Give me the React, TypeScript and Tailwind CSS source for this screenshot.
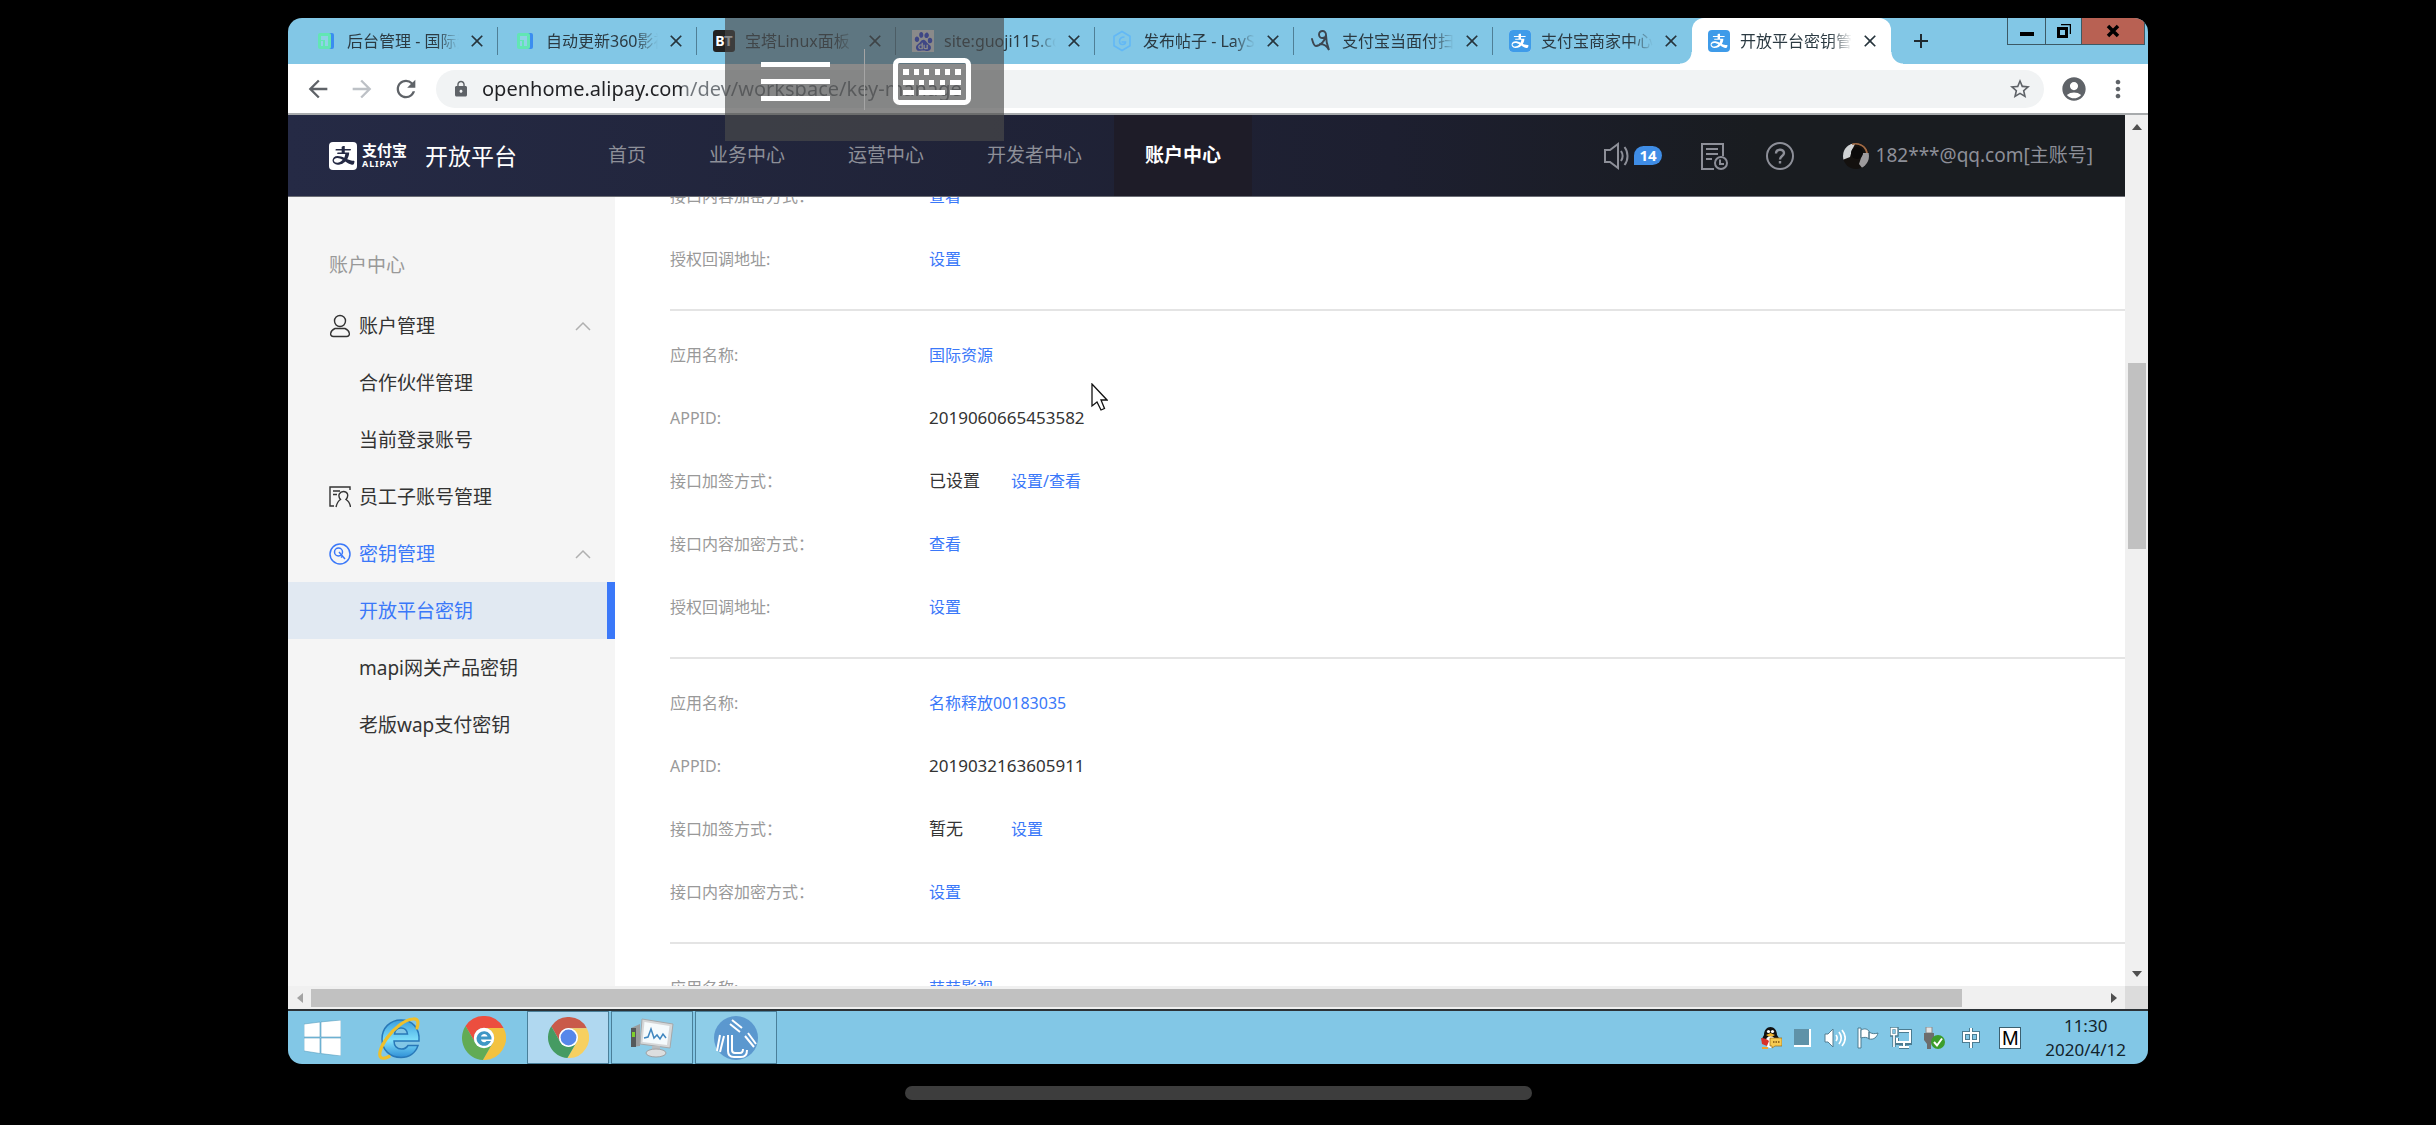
import React from "react";
import clsx from "clsx";
import {
  MdArrowBack,
  MdArrowForward,
  MdRefresh,
  MdLock,
  MdStarBorder,
  MdAccountCircle,
  MdMoreVert,
  MdClose,
  MdAdd,
} from "react-icons/md";
import { AiFillAlipaySquare } from "react-icons/ai";
import { SiBaidu } from "react-icons/si";

/* ---------- favicons ---------- */

const CubeIcon = () => (
  <svg viewBox="0 0 22 22" className="size-[22px]">
    <rect x="8" y="3" width="11" height="16" rx="2" fill="#3b8df0" />
    <rect x="3" y="3" width="13" height="16" rx="2" fill="#62e6b4" />
    <path d="M6 6h7v10h-3v-6H6z" fill="#8fd3e6" />
    <path d="M6 11h2v5H6z" fill="#8fd3e6" />
  </svg>
);

const BtIcon = () => (
  <span className="flex size-[22px] items-center justify-center rounded-[3px] bg-[#222] text-[14px] leading-none font-bold text-white">
    BT
  </span>
);

const BaiduIcon = () => (
  <span className="flex size-[22px] items-center justify-center bg-white text-[#2a3ff0]">
    <SiBaidu className="size-[19px]" />
  </span>
);

const LayIcon = () => (
  <svg viewBox="0 0 22 22" className="size-[22px]" fill="none" stroke="#62b8f6" strokeWidth="1.6">
    <path d="M11 1.5l8 4.7v9.6l-8 4.7-8-4.7V6.200z" />
    <path d="M13.500 7c-3 0-5 1.500-5 4.500 0 2 1 3 3 3s3-1 3-2.500h-4" />
  </svg>
);

const ScriptIcon = () => (
  <svg viewBox="0 0 22 22" className="size-[22px]" fill="none" stroke="#3c4650" strokeWidth="1.900" strokeLinecap="round">
    <path d="M2 9c1 4 2 7 4 7 4 0 10-6 10-11 0-2.500-1.500-4-3.500-4S9 2.500 9 4.500 10.500 8 12.500 8 16 7 16 5c0 5 1 10 3 15-2-4-5-6-9-6" />
  </svg>
);

const AlipayFavicon = () => (
  <span className="flex size-[22px] items-center justify-center overflow-hidden rounded-[4px] bg-white text-[#3e9be9]">
    <AiFillAlipaySquare className="size-[30px] shrink-0" />
  </span>
);

const tabs = [
  { title: "后台管理 - 国际资源", icon: <CubeIcon /> },
  { title: "自动更新360影视", icon: <CubeIcon /> },
  { title: "宝塔Linux面板", icon: <BtIcon /> },
  { title: "site:guoji115.com", icon: <BaiduIcon /> },
  { title: "发布帖子 - LaySNS", icon: <LayIcon /> },
  { title: "支付宝当面付扫码", icon: <ScriptIcon /> },
  { title: "支付宝商家中心", icon: <AlipayFavicon /> },
  { title: "开放平台密钥管理", icon: <AlipayFavicon />, active: true },
];

const TabStrip = () => (
  <div className="flex h-[46px] items-stretch bg-[#82c7e6] pl-[11px]">
    {tabs.map((tab, i) => (
      <div
        key={tab.title}
        className={clsx(
          "relative flex w-[199px] items-center pl-4",
          tab.active && "rounded-t-xl bg-white"
        )}
      >
        {tab.active && (
          <>
            <span className="absolute bottom-0 -left-3 size-3 bg-[radial-gradient(circle_at_top_left,transparent_11px,white_12px)]" />
            <span className="absolute -right-3 bottom-0 size-3 bg-[radial-gradient(circle_at_top_right,transparent_11px,white_12px)]" />
          </>
        )}
        {tab.icon}
        <button className="ml-[10px] w-28 overflow-hidden text-left text-base whitespace-nowrap text-[#2b3a42] [mask-image:linear-gradient(to_right,black_80%,transparent)]">
          {tab.title}
        </button>
        <button aria-label="关闭" className="ml-2 text-[#26343c]">
          <MdClose className="size-5" />
        </button>
        {i < 6 && <span className="absolute right-0 h-7 w-px bg-[#4f7f96]" />}
      </div>
    ))}
    <button aria-label="新标签页" className="ml-[18px] text-[#1f2a30]">
      <MdAdd className="size-6" />
    </button>
    <div className="mr-[3px] ml-auto flex h-[27px] border border-t-0 border-[#3c5965] text-black">
      <button aria-label="最小化" className="flex w-[38px] items-center justify-center border-r border-[#3c5965]">
        <svg viewBox="0 0 14 14" className="size-[14px]">
          <path d="M0 8h14v4H0z" />
        </svg>
      </button>
      <button aria-label="还原" className="flex w-9 items-center justify-center border-r border-[#3c5965]">
        <svg viewBox="0 0 14 14" className="size-[14px]" fill="none" stroke="currentColor">
          <path d="M1.500 4.500h8v8h-8z" strokeWidth="3" />
          <path d="M4 .5h9.500V10" strokeWidth="1.500" />
        </svg>
      </button>
      <button aria-label="关闭窗口" className="flex w-[62px] items-center justify-center bg-[#b86153]">
        <svg viewBox="0 0 14 14" className="size-[14px]" stroke="currentColor" strokeWidth="3.500">
          <path d="M2 2l10 10M12 2L2 12" />
        </svg>
      </button>
    </div>
  </div>
);

const Toolbar = () => (
  <div className="flex h-[51px] items-center border-b-2 border-[#a8abad] bg-white text-[#5f6368]">
    <button aria-label="后退" className="ml-4">
      <MdArrowBack className="size-7" />
    </button>
    <button aria-label="前进" className="ml-4 text-[#bdc1c6]">
      <MdArrowForward className="size-7" />
    </button>
    <button aria-label="刷新" className="ml-4">
      <MdRefresh className="size-7" />
    </button>
    <div className="ml-4 flex h-[38px] flex-1 items-center rounded-full bg-[#f1f3f4] pr-3 pl-4">
      <MdLock className="size-[18px]" />
      <input
        aria-label="地址"
        readOnly
        value="openhome.alipay.com/dev/workspace/key-manage"
        className="ml-3 flex-1 bg-[linear-gradient(to_right,#202124_200px,#70757a_200px)] bg-clip-text text-[20px] text-transparent outline-none"
      />
      <button aria-label="收藏">
        <MdStarBorder className="size-6" />
      </button>
    </div>
    <button aria-label="用户" className="ml-4">
      <MdAccountCircle className="size-7" />
    </button>
    <button aria-label="更多" className="mr-4 ml-4">
      <MdMoreVert className="size-7" />
    </button>
  </div>
);

/* ---------- alipay header ---------- */

const navItems = ["首页", "业务中心", "运营中心", "开发者中心", "账户中心"];

const SpeakerIcon = () => (
  <svg viewBox="0 0 28 28" className="size-7" fill="none" stroke="currentColor" strokeWidth="2">
    <path d="M2 8h5l8-6v24l-8-6H2z" />
    <path d="M18 9c2 3 2 7 0 10M21.500 5c4 5 4 13 0 18" />
  </svg>
);

const OrderIcon = () => (
  <svg viewBox="0 0 28 28" className="size-7" fill="none" stroke="currentColor" strokeWidth="2">
    <path d="M14 27H2V2h21v12M6 7h12M6 12h12M6 17h6" />
    <circle cx="21" cy="21" r="6" />
    <path d="M20 17.500V22h4" />
  </svg>
);

const HelpIcon = () => (
  <svg viewBox="0 0 28 28" className="size-7" fill="none" stroke="currentColor" strokeWidth="2">
    <circle cx="14" cy="14" r="13" />
    <path d="M10 11.500c0-5 8-5 8-.5 0 3-4 3-4 6.500M14 19v2.500" strokeWidth="2.400" />
  </svg>
);

const Avatar = () => (
  <svg viewBox="0 0 28 28" className="size-7">
    <clipPath id="face">
      <circle cx="14" cy="14" r="13" />
    </clipPath>
    <g clipPath="url(#face)">
      <path d="M0 0h28v28H0z" fill="#14110f" />
      <path d="M0 16C0 6 6 1 13 2l-3 6-2 7-8 3z" fill="#d0d3d5" />
      <path d="M10 2c8-2 14 3 15 9" fill="none" stroke="#a06a45" strokeWidth="2" />
      <path d="M21 11h7v11l-7 5-4-5 2-6z" fill="#9d9b9d" />
      <circle cx="15" cy="11" r="6" fill="#0b0a0a" />
    </g>
  </svg>
);

const Header = () => (
  <header className="flex h-[82px] shrink-0 items-center border-b border-[#6b6d75] bg-[linear-gradient(to_right,#252a45,#1d1f30_60%,#191c20_80%)] text-[#8d8f98]">
    <a href="#" className="ml-[41px] flex items-center text-white">
      <span className="flex size-7 items-center justify-center overflow-hidden rounded-[4px]">
        <AiFillAlipaySquare className="size-[39px] shrink-0" />
      </span>
      <span className="ml-[5px] flex flex-col">
        <span className="text-[15px] leading-[17px] font-bold">支付宝</span>
        <span className="text-[9px] leading-[10px] font-bold tracking-widest">ALIPAY</span>
      </span>
      <span className="ml-[18px] text-[23px] leading-8">开放平台</span>
    </a>
    <nav className="ml-[60px] flex gap-px self-stretch text-[19px]">
      {navItems.map((item) => (
        <a
          key={item}
          href="#"
          className={clsx(
            "flex items-center px-[31px]",
            item === "账户中心" && "bg-[#1e1c28] font-bold text-white"
          )}
        >
          {item}
        </a>
      ))}
    </nav>
    <div className="mr-8 ml-auto flex items-center">
      <a href="#" aria-label="消息" className="flex items-center">
        <SpeakerIcon />
        <span className="ml-[3px] rounded-full rounded-bl-none bg-[#3f8de6] px-[5px] text-[15px] leading-[19px] font-bold text-white">
          14
        </span>
      </a>
      <a href="#" aria-label="工单" className="ml-[38px]">
        <OrderIcon />
      </a>
      <a href="#" aria-label="帮助" className="ml-[38px]">
        <HelpIcon />
      </a>
      <a href="#" className="ml-12 flex items-center text-[19px]">
        <Avatar />
        <span className="ml-[6px]">182***@qq.com[主账号]</span>
      </a>
    </div>
  </header>
);

/* ---------- sidebar ---------- */

const UserIcon = () => (
  <svg viewBox="0 0 22 24" className="h-6 w-[22px]" fill="none" stroke="currentColor" strokeWidth="1.400">
    <circle cx="11" cy="7" r="5.500" />
    <path d="M6 14.500h10c5 2 6 8 1.500 8h-13C0 22.500 1 16.500 6 14.500z" />
  </svg>
);

const StaffIcon = () => (
  <svg viewBox="0 0 22 24" className="h-6 w-[22px]" fill="none" stroke="currentColor" strokeWidth="1.400">
    <path d="M5 21H1V2h20v3M4 6h7M4 9.500h4" />
    <path d="M7 22c1-4 2-6 4.500-7.500C8 10 11 6.500 14.500 6.500s6 3.500 2.500 8c2.500 1.500 4 4 4.500 7.500" />
  </svg>
);

const KeyIcon = () => (
  <svg viewBox="0 0 22 24" className="h-6 w-[22px]" fill="none" stroke="currentColor" strokeWidth="1.500">
    <circle cx="11" cy="12" r="10" />
    <circle cx="9.500" cy="10" r="4" />
    <path d="M10 10l6 7M14 13.500l-2 2" />
  </svg>
);

const menu = [
  { label: "账户管理", icon: <UserIcon />, open: true },
  { label: "合作伙伴管理" },
  { label: "当前登录账号" },
  { label: "员工子账号管理", icon: <StaffIcon /> },
  { label: "密钥管理", icon: <KeyIcon />, open: true, highlight: true },
  { label: "开放平台密钥", highlight: true, current: true },
  { label: "mapi网关产品密钥" },
  { label: "老版wap支付密钥" },
];

const Sidebar = () => (
  <aside className="w-[327px] shrink-0 bg-[#f5f5f5] pt-[54px] text-[19px] leading-7">
    <h2 className="pl-[41px] text-[#999]">账户中心</h2>
    <ul className="mt-[18px]">
      {menu.map((item) => (
        <li key={item.label}>
          <a
            href="#"
            className={clsx(
              "flex h-[57px] items-center pl-[41px]",
              item.highlight ? "text-[#3a78f9]" : "text-[#333]",
              item.current ? "border-r-8 border-[#3a78f9] bg-[#e1e9f2]" : "pr-[23px]"
            )}
          >
            <span className="w-[30px]">{item.icon}</span>
            {item.label}
            {item.open && (
              <svg viewBox="0 0 18 10" className="ml-auto h-[10px] w-[18px]" fill="none" stroke="#b0b0b0" strokeWidth="1.500">
                <path d="M2 9l7-7 7 7" />
              </svg>
            )}
          </a>
        </li>
      ))}
    </ul>
  </aside>
);

/* ---------- app list ---------- */

type Row = { label: string; text?: string; link?: string };

const apps: Row[][] = [
  [
    { label: "接口内容加密方式：", link: "查看" },
    { label: "授权回调地址:", link: "设置" },
  ],
  [
    { label: "应用名称:", link: "国际资源" },
    { label: "APPID:", text: "2019060665453582" },
    { label: "接口加签方式：", text: "已设置", link: "设置/查看" },
    { label: "接口内容加密方式：", link: "查看" },
    { label: "授权回调地址:", link: "设置" },
  ],
  [
    { label: "应用名称:", link: "名称释放00183035" },
    { label: "APPID:", text: "2019032163605911" },
    { label: "接口加签方式：", text: "暂无", link: "设置" },
    { label: "接口内容加密方式：", link: "设置" },
  ],
  [{ label: "应用名称:", link: "萌萌影视" }],
];

const AppList = () => (
  <main className="min-w-0 flex-1 overflow-hidden bg-white pl-[55px] text-base">
    <div className="-mt-[45px]">
      {apps.map((rows, i) => (
        <dl key={i} className="border-b-2 border-[#e4e4e4] pt-3 pb-[19px]">
          {rows.map((row) => (
            <div key={row.label} className="flex h-[63px] items-center">
              <dt className="w-[259px] text-[#999]">{row.label}</dt>
              <dd className="flex items-baseline text-[#333]">
                {row.text && <span className="min-w-[82px] text-[17px]">{row.text}</span>}
                {row.link && (
                  <a href="#" className="text-[#3a78f9]">
                    {row.link}
                  </a>
                )}
              </dd>
            </div>
          ))}
        </dl>
      ))}
    </div>
  </main>
);

const Arrow = ({ className }: { className?: string }) => (
  <svg viewBox="0 0 10 6" className={clsx("h-[6px] w-[10px]", className)} fill="currentColor">
    <path d="M5 0l5 6H0z" />
  </svg>
);

const VerticalScroll = () => (
  <div className="flex w-[23px] shrink-0 flex-col items-center bg-[#f0f0f0] text-[#505050]">
    <button aria-label="向上滚动" className="flex h-6 items-center">
      <Arrow />
    </button>
    <div className="mt-[224px] h-[186px] w-[18px] bg-[#c1c1c1]" />
    <button aria-label="向下滚动" className="mt-auto flex h-6 items-center">
      <Arrow className="rotate-180" />
    </button>
  </div>
);

const HorizontalScroll = () => (
  <div className="flex h-[23px] shrink-0 items-center bg-[#f0f0f0]">
    <button aria-label="向左滚动" className="flex w-[23px] justify-center text-[#a3a3a3]">
      <Arrow className="-rotate-90" />
    </button>
    <div className="flex-1 pr-[140px]">
      <div className="h-[18px] bg-[#c1c1c1]" />
    </div>
    <button aria-label="向右滚动" className="flex w-[23px] justify-center text-[#505050]">
      <Arrow className="rotate-90" />
    </button>
    <div className="size-[23px] bg-[#dcdcdc]" />
  </div>
);

/* ---------- taskbar ---------- */

const WindowsIcon = () => (
  <svg viewBox="0 0 37 36" className="h-9 w-[37px]" fill="#fff" stroke="#5b9fbf" strokeWidth=".6">
    <path d="M0 4l16-2v15H0zM17 1.900L37 0v17H17zM0 18h16v15.500L0 31zM17 18h20v18l-20-2.400z" />
  </svg>
);

const IeIcon = () => (
  <svg viewBox="0 0 44 44" className="size-11">
    <defs>
      <linearGradient id="ie" x1="0" y1="0" x2="0" y2="1">
        <stop offset="0" stopColor="#3d9fdd" />
        <stop offset=".55" stopColor="#7fe0fb" />
        <stop offset="1" stopColor="#2f8fd6" />
      </linearGradient>
    </defs>
    <path
      d="M42 25H17c0 5 3 8 7.500 8 3 0 5-1 6.500-3.500h10C38.500 37 32 41.500 24 41.500 13 41.500 5 34 5 23S13 4 24 4s19 8 18 21zM17.500 18h13c-.5-4-3-6-6.500-6s-6 2-6.500 6z"
      fill="url(#ie)"
      stroke="#2878b8"
      strokeWidth="1.500"
      fillRule="evenodd"
    />
    <path
      d="M40 12c2-6 1-9.500-4-9-8 .5-19 9-26 19C3.500 31 1 39 4 41.500c2 1.500 5 .5 8-1"
      fill="none"
      stroke="#efc02c"
      strokeWidth="3.200"
      strokeLinecap="round"
    />
  </svg>
);

type ChromeProps = { colors: [string, string, string]; children: React.ReactNode; className?: string };

const ChromeIcon = ({ colors, children, className }: ChromeProps) => (
  <svg viewBox="2 2 44 44" className={className}>
    <path d="M24 14h19.600A22 22 0 0 0 5.540 12.030L15.340 29A10 10 0 0 1 24 14z" fill={colors[0]} />
    <path d="M32.660 29l-9.800 16.970A22 22 0 0 0 43.600 14H24A10 10 0 0 1 32.660 29z" fill={colors[1]} />
    <path d="M15.340 29L5.540 12.030A22 22 0 0 0 22.860 45.970L32.660 29A10 10 0 0 1 15.340 29z" fill={colors[2]} />
    <circle cx="24" cy="24" r="10.200" fill="#fff" />
    {children}
  </svg>
);

const MonitorIcon = () => (
  <svg viewBox="0 0 44 40" className="h-10 w-11">
    <path d="M1 10l9-4v22l-9 1z" fill="#9a9c9e" />
    <path d="M1 10h5v19H1z" fill="#55595b" />
    <path d="M2 14h3v5H2z" fill="#7fd02c" />
    <path d="M12 1l31 5-3 24-30-4z" fill="#d5d7d8" stroke="#a5a8aa" />
    <path d="M14.500 4l25 4-2.500 19-24.500-3z" fill="#f5fafc" />
    <path d="M14 20l4-1 3-8 3 9 3-3 3 4 3-5 3 4" fill="none" stroke="#3f86bf" strokeWidth="1.500" />
    <path d="M22 28h8v5h-8z" fill="#b9bbbd" />
    <ellipse cx="26" cy="35" rx="10" ry="4" fill="#dcdedf" stroke="#9fa1a3" />
  </svg>
);

const HeartIcon = () => (
  <svg viewBox="0 0 44 44" className="size-11" fill="none" stroke="#fff" strokeWidth="2">
    <circle cx="22" cy="22" r="22" fill="#5b98cf" stroke="none" />
    <path d="M14 19v16c0 4 2 6 6 6h7c4 0 6-2 6-7M18 19v15c0 2 1 3 3 3h5c2 0 3-1 3-4" />
    <path d="M18 4l10 8M16 8l10 8M6 19L3 35M10 20L6 36M31 20l9 11M34 17l8 11" />
  </svg>
);

const Taskbar = () => (
  <footer className="flex h-[55px] shrink-0 items-stretch border-t-2 border-[#2c3236] bg-[#82c7e6]">
    <button aria-label="开始" className="flex w-[69px] items-center justify-center">
      <WindowsIcon />
    </button>
    <button aria-label="Internet Explorer" className="flex w-[84px] items-center justify-center">
      <IeIcon />
    </button>
    <button aria-label="浏览器" className="flex w-[86px] items-center justify-center">
      <ChromeIcon colors={["#ec4e3f", "#f3c23f", "#62ab55"]} className="size-11">
        <path
          d="M16.500 24a7.500 7.500 0 1 1 15 1.500H21c.5 3 4 3.500 5.500 1.500h4.500a7.500 7.500 0 0 1-14.500-3zM21 22.500h6.500c-.5-3.500-6-3.500-6.500 0z"
          fill="#3f97c6"
          fillRule="evenodd"
        />
      </ChromeIcon>
    </button>
    <button aria-label="Chrome" className="flex w-[82px] items-center justify-center border border-[#4a7f99] bg-[#b0d8f0]">
      <ChromeIcon colors={["#c95a4a", "#f7d060", "#459b62"]} className="size-[41px]">
        <circle cx="24" cy="24" r="8.500" fill="#5687ea" />
      </ChromeIcon>
    </button>
    <button aria-label="任务管理器" className="ml-[2px] flex w-[82px] items-center justify-center border border-[#4a7f99] bg-[#8ecde8]">
      <MonitorIcon />
    </button>
    <button aria-label="心" className="ml-[2px] flex w-[82px] items-center justify-center border border-[#4a7f99] bg-[#8ecde8]">
      <HeartIcon />
    </button>

    <div className="mr-[22px] ml-auto flex items-center">
      <svg viewBox="0 0 22 22" className="size-[22px]">
        <path d="M4 17c-3-3-2-6 0-9C4 3 7 0 10.500 0S17 3 17 8c3 4 3 7 0 10z" fill="#111" />
        <ellipse cx="10.500" cy="15" rx="5" ry="6" fill="#fff" />
        <path d="M1 11c3 0 6 1 8 3l-2 5-5-2z" fill="#d8322a" />
        <circle cx="8.500" cy="4.500" r="1.600" fill="#fff" />
        <circle cx="12.500" cy="4.500" r="1.600" fill="#fff" />
        <path d="M6 8c3 2 6 2 9 0l-4.500-2z" fill="#f0b32c" />
        <path d="M10 11h12v8h-7l-3 2v-2h-2z" fill="#f7cb52" stroke="#9a6a14" strokeWidth=".7" />
        <path d="M13 15h1.500M15.500 15H17M18 15h1.500" stroke="#7d5310" strokeWidth="1.500" />
        <path d="M2 21h6" stroke="#f0a52c" strokeWidth="2" />
      </svg>
      <span className="ml-3 h-[18px] w-[17px] border-r-2 border-b-2 border-white bg-[#5f92a8]" />
      <svg viewBox="0 0 22 22" className="ml-[13px] size-[22px]" fill="none" stroke="#fff" strokeWidth="1.700">
        <path d="M1 7h3l5-5v18l-5-5H1z" fill="#fff" stroke="#557f92" strokeWidth="1" />
        <path d="M12 8c1.500 2 1.500 4 0 6M15 5c3 4 3 8 0 12M18 3c4 5 4 11 0 16" />
      </svg>
      <svg viewBox="0 0 22 22" className="ml-[11px] size-[22px]" fill="#fff" stroke="#4c7c91" strokeWidth="1">
        <path d="M1 1h3v20H1z" />
        <path d="M4 3c4-2 6-1 8 1v8c-2-2-5-2-8-1zM12 5c3 2 6 2 9 1-1 4-4 7-9 6z" />
      </svg>
      <svg viewBox="0 0 22 22" className="ml-[11px] size-[22px]" fill="none">
        <path d="M9 4h12v12H7v-5M14 16v4M9 20.500h10" stroke="#4c7c91" strokeWidth="4" />
        <path d="M1 1h6v7H1zM4 8v12" stroke="#4c7c91" strokeWidth="3.500" />
        <path d="M9 4h11v11H7v-4M14 16v4M9 20h10" stroke="#fff" strokeWidth="2" />
        <path d="M1.500 1.500h5v6h-5zM4 8v12" stroke="#fff" strokeWidth="1.700" />
      </svg>
      <svg viewBox="0 0 22 22" className="ml-[11px] size-[22px]">
        <path d="M3 0h6v6H3z" fill="#e3e3e3" stroke="#8a8a8a" />
        <path d="M1 6h10v7l-3 4v5H4v-5l-3-4z" fill="#6d6d6d" />
        <circle cx="15" cy="15" r="7" fill="#3c9d2c" />
        <path d="M11 15l3 3.500 5-7" fill="none" stroke="#fff" strokeWidth="2" />
      </svg>
      <svg viewBox="0 0 18 22" className="ml-[17px] h-[22px] w-[18px]" fill="none">
        <path d="M2 6h14v8H2zM9 1v20" stroke="#4c7c91" strokeWidth="4" />
        <path d="M2 6h14v8H2zM9 1v20" stroke="#fff" strokeWidth="2" />
      </svg>
      <span className="ml-[19px] flex size-[22px] items-center justify-center border border-[#3c6070] bg-white font-['Liberation_Sans',sans-serif] text-[20px] leading-none text-black">
        M
      </span>
      <div className="ml-6 text-center text-[17px] leading-6 text-[#12232b]">
        <div>11:30</div>
        <div>2020/4/12</div>
      </div>
    </div>
  </footer>
);

/* ---------- floating things ---------- */

const KeyboardIcon = () => (
  <svg viewBox="0 0 78 48" className="h-12 w-[78px]" fill="#fff">
    <rect x="2.500" y="2.500" width="73" height="42" rx="4" fill="none" stroke="#fff" strokeWidth="5" />
    <path d="M10 11h6v6h-6zM21 11h5v6h-5zM31 11h5v6h-5zM42 11h5v6h-5zM52 11h5v6h-5zM62 11h6v6h-6z" />
    <path d="M10 22h11v5H10zM26 22h5v5h-5zM36 22h5v5h-5zM47 22h5v5h-5zM57 22h11v5H57z" />
    <path d="M10 32h11v5H10zM26 32h26v5H26zM57 32h11v5H57z" />
  </svg>
);

const RemoteOverlay = () => (
  <div className="absolute top-0 left-[437px] flex h-[123px] w-[279px] items-start bg-[#4b4b4b]/65">
    <button aria-label="菜单" className="mt-11 ml-9 flex w-[69px] flex-col gap-3">
      <span className="h-[5px] w-full bg-white" />
      <span className="h-[5px] w-full bg-white" />
      <span className="h-[5px] w-full bg-white" />
    </button>
    <span className="mt-[31px] ml-[34px] h-[61px] w-px bg-[#a5a5a5]" />
    <button aria-label="键盘" className="mt-10 ml-7">
      <KeyboardIcon />
    </button>
  </div>
);

const App = () => {
  return (
    <div className="flex h-screen min-h-[600px] flex-col bg-black font-['Noto_Sans','Noto_Sans_CJK_SC',sans-serif]">
      <div className="relative mx-[288px] mt-[18px] flex min-h-0 flex-1 flex-col overflow-hidden rounded-[14px]">
        <TabStrip />
        <Toolbar />
        <div className="flex min-h-0 flex-1">
          <div className="flex min-w-0 flex-1 flex-col">
            <Header />
            <div className="flex min-h-0 flex-1">
              <Sidebar />
              <AppList />
            </div>
          </div>
          <VerticalScroll />
        </div>
        <HorizontalScroll />
        <Taskbar />

        <RemoteOverlay />
        <svg viewBox="0 0 17 28" className="absolute top-[365px] left-[803px] h-7 w-[17px]">
          <path d="M1 1v22l5-4 4 8 3.500-1.500L10 17h6z" fill="#fff" stroke="#111" strokeWidth="1.300" />
        </svg>
      </div>
      <div className="flex justify-center pt-[22px] pb-[25px]">
        <div className="h-[14px] w-[627px] rounded-full bg-[#3d3d3d]" />
      </div>
    </div>
  );
};

export default App;
